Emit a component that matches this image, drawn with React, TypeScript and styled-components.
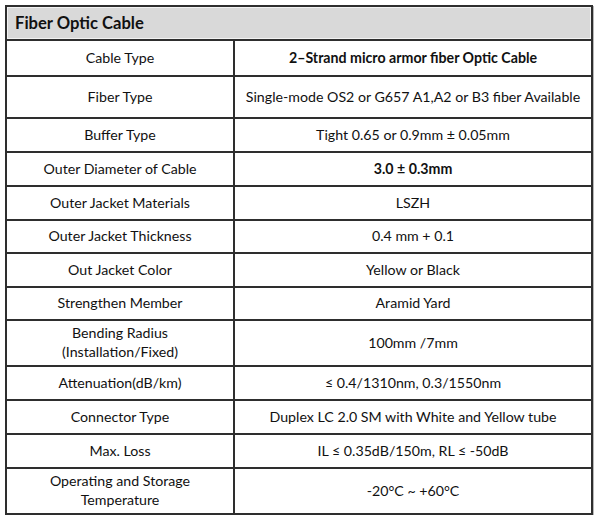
import React from "react";
import styled, { createGlobalStyle } from "styled-components";

const Global = createGlobalStyle`
  html, body { margin: 0; padding: 0; background: #ffffff; }
  body { font-family: Lato, "Open Sans", sans-serif; color: #111; }
`;

const Page = styled.div`
  padding: 5px 0 0 5px;
`;

const Table = styled.div`
  width: 588px;
  box-sizing: border-box;
  border: 2px solid #2e2e2e;
  box-shadow: 1px 1px 0 #b8b8b8;
`;

const Header = styled.div`
  height: 32px;
  box-sizing: border-box;
  background: #d9d9d9;
  box-shadow: inset 0 0 0 1px #f2f2f2;
  display: flex;
  align-items: center;
  padding-left: 8px;
  font-size: 16.6px;
  font-weight: 700;
`;

const Row = styled.div<{ $h: number }>`
  display: grid;
  grid-template-columns: 228px 1fr;
  height: ${(p) => p.$h}px;
  border-top: 2px solid #2e2e2e;
`;

const Cell = styled.div<{ $bold?: boolean; $label?: boolean }>`
  display: flex;
  align-items: center;
  justify-content: center;
  text-align: center;
  padding: 0 4px 2px;
  font-size: 14.2px;
  line-height: 19px;
  font-weight: ${(p) => (p.$bold ? 700 : 400)};
  border-right: ${(p) => (p.$label ? "2px solid #2e2e2e" : "none")};
`;

type Item = { label: React.ReactNode; value: React.ReactNode; h: number; bold?: boolean };

const rows: Item[] = [
  { label: "Cable Type", value: "2–Strand micro armor fiber Optic Cable", h: 34, bold: true },
  { label: "Fiber Type", value: "Single-mode OS2 or G657 A1,A2 or B3 fiber Available", h: 40 },
  { label: "Buffer Type", value: "Tight 0.65 or 0.9mm ± 0.05mm", h: 32 },
  { label: "Outer Diameter of Cable", value: "3.0 ± 0.3mm", h: 32, bold: true },
  { label: "Outer Jacket Materials", value: "LSZH", h: 32 },
  { label: "Outer Jacket Thickness", value: "0.4 mm + 0.1", h: 31 },
  { label: "Out Jacket Color", value: "Yellow or Black", h: 32 },
  { label: "Strengthen Member", value: "Aramid Yard", h: 31 },
  {
    label: (
      <>
        Bending Radius
        <br />
        (Installation/Fixed)
      </>
    ),
    value: "100mm /7mm",
    h: 44,
  },
  { label: "Attenuation(dB/km)", value: "≤ 0.4/1310nm, 0.3/1550nm", h: 32 },
  { label: "Connector Type", value: "Duplex LC 2.0 SM with White and Yellow tube", h: 32 },
  { label: "Max. Loss", value: "IL ≤ 0.35dB/150m, RL ≤ -50dB", h: 32 },
  {
    label: (
      <>
        Operating and Storage
        <br />
        Temperature
      </>
    ),
    value: "-20°C ~ +60°C",
    h: 44,
  },
];

export default function App() {
  return (
    <Page>
      <Global />
      <Table>
        <Header>Fiber Optic Cable</Header>
        {rows.map((r, i) => (
          <Row key={i} $h={r.h}>
            <Cell $label>{r.label}</Cell>
            <Cell $bold={r.bold}>{r.value}</Cell>
          </Row>
        ))}
      </Table>
    </Page>
  );
}
